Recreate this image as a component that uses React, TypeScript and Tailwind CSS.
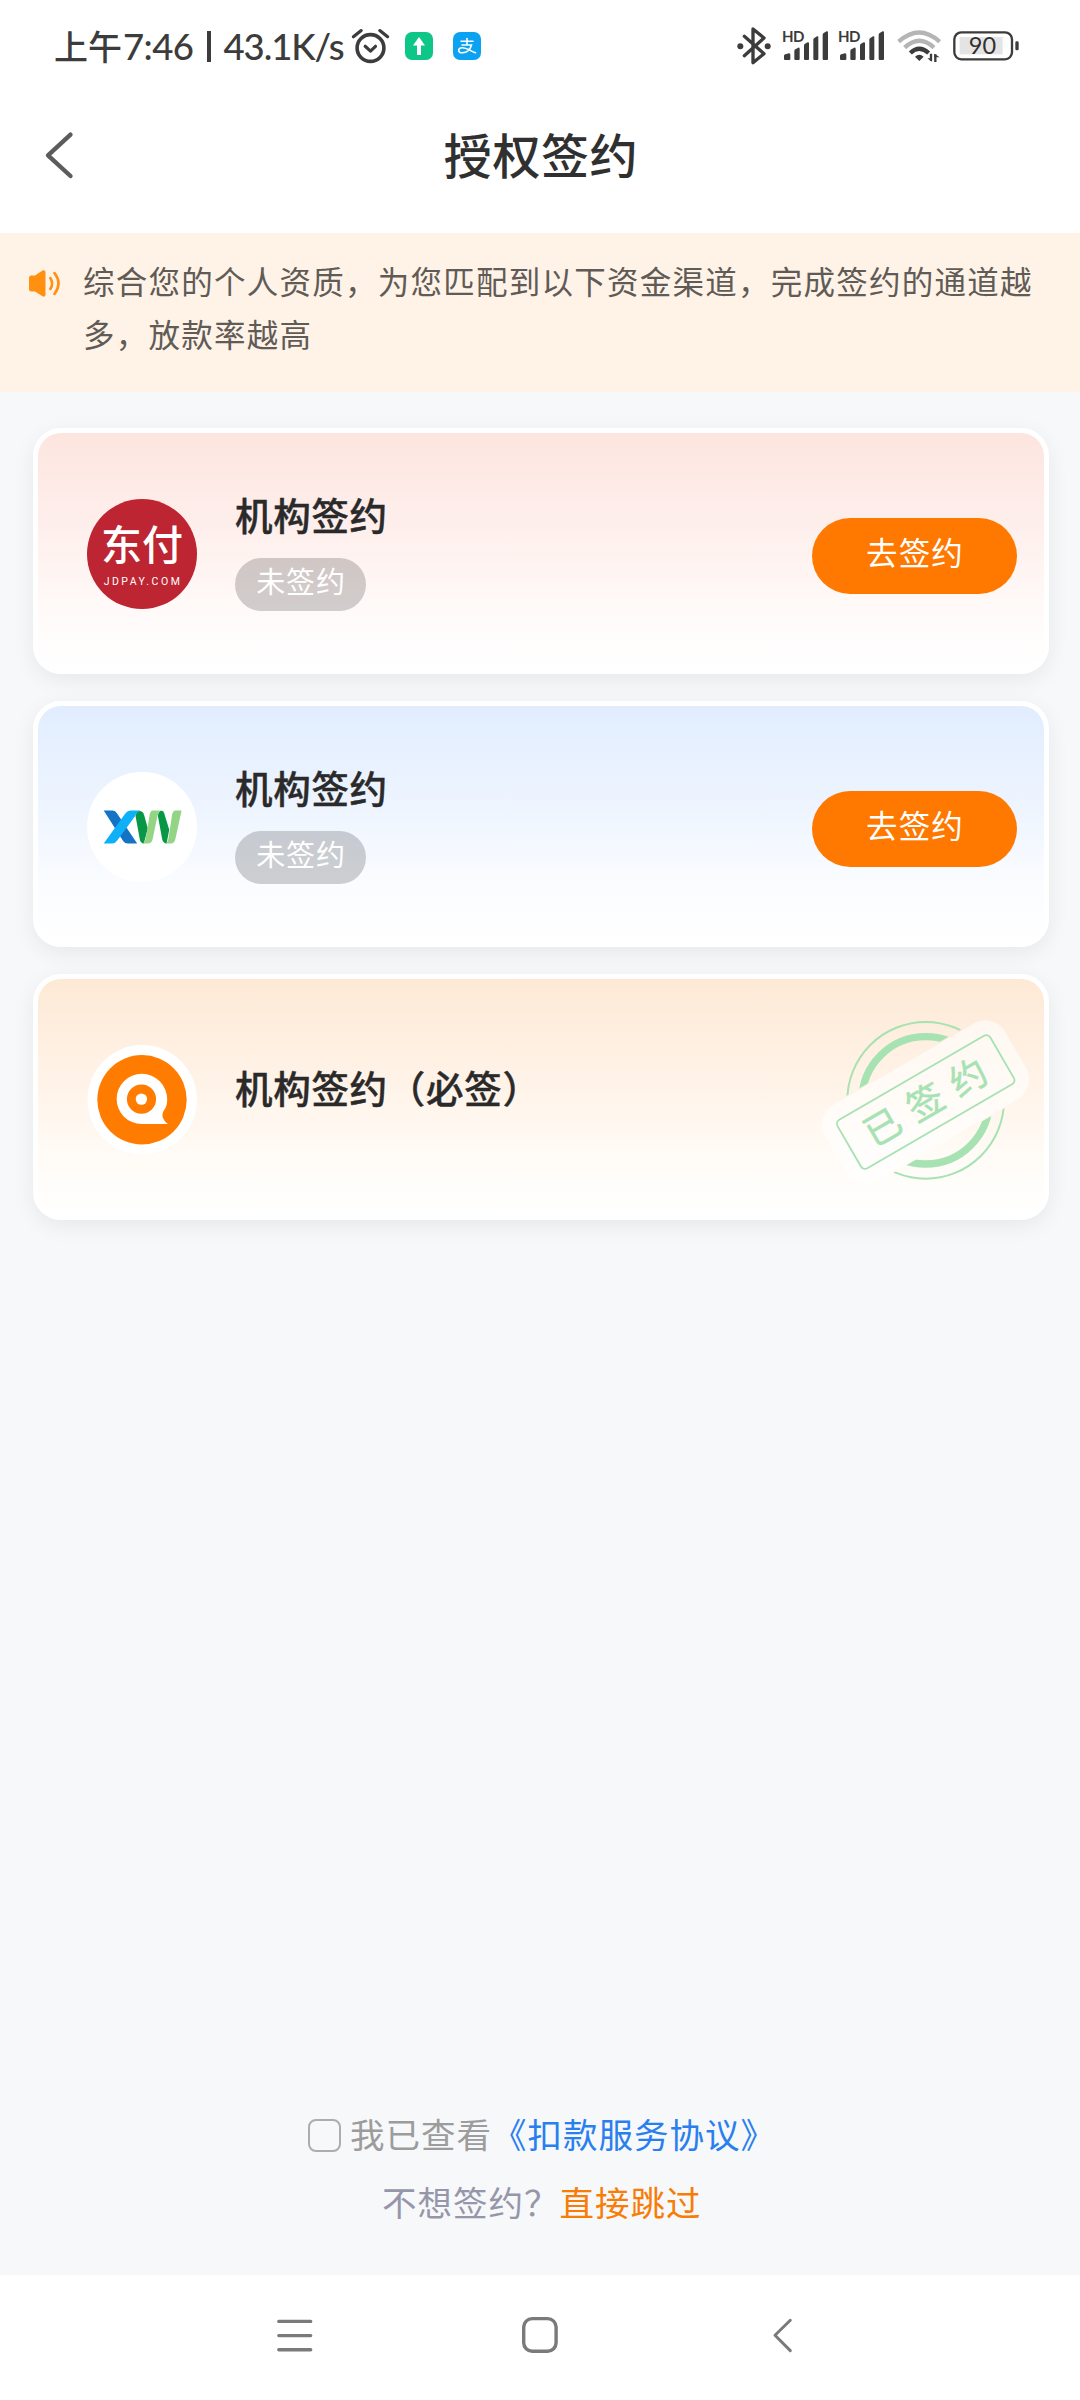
import React from "react";

const INK = "#3c3c3d";

function AlarmIcon() {
  return (
    <svg className="ml-[6px] h-[36px] w-[39px]" viewBox="0 0 39 36" fill="none" stroke={INK} strokeLinecap="round">
      <circle cx="19.5" cy="20" r="13.4" strokeWidth="3.6" />
      <path d="M14.2 18.3l5.3 4.8 5-4.8" strokeWidth="3.2" strokeLinejoin="round" />
      <path d="M2.4 8.8l7.8-6.2M36.6 8.8l-7.8-6.2" strokeWidth="3.2" />
    </svg>
  );
}

function BluetoothIcon() {
  return (
    <svg className="h-[38px] w-[34px]" viewBox="112 82 102 114" fill="none">
      <path d="M134 110L193 162L160 189V88L193 115L134 168" stroke={INK} strokeWidth="10" strokeLinejoin="round" strokeLinecap="round" />
      <circle cx="122" cy="140" r="9" fill={INK} />
      <circle cx="204" cy="140" r="9" fill={INK} />
    </svg>
  );
}

function HdSignal() {
  return (
    <div className="relative h-[32px] w-[47px]">
      <span className="absolute top-0 left-0 font-['Lato'] text-[15px] leading-[12px] font-bold tracking-[-0.5px] text-[#3c3c3d]">HD</span>
      <svg className="absolute top-0 left-0 h-[32px] w-[47px]" viewBox="246 94 141 96" fill={INK}>
        <path d="M252 171Q252 168 256 167L267 164Q271 164 271 168V181Q271 184 268 184H255Q252 184 252 181Z" />
        <path d="M283 157Q283 154 286 152L295 147Q299 146 299 150V181Q299 184 296 184H286Q283 184 283 181Z" />
        <path d="M312 140Q312 137 315 135L323 131Q327 130 327 134V181Q327 184 324 184H315Q312 184 312 181Z" />
        <path d="M340 123Q340 120 343 118L351 113Q355 112 355 116V181Q355 184 352 184H343Q340 184 340 181Z" />
        <path d="M368 108Q368 105 371 103L380 98Q384 97 384 101V181Q384 184 381 184H371Q368 184 368 181Z" />
      </svg>
    </div>
  );
}

function WifiIcon() {
  return (
    <svg className="ml-[12px] h-[34px] w-[44px]" viewBox="587 91 132 102" fill="none" strokeLinecap="butt">
      <path d="M592 129Q653 74 715 129" stroke="#b5b5b5" strokeWidth="13" />
      <path d="M610 147Q654 106 698 147" stroke="#b5b5b5" strokeWidth="13" />
      <path d="M627 163Q654 138 682 163" stroke={INK} strokeWidth="13" />
      <path d="M641 174Q654 162 667 174L654 187Z" fill={INK} />
      <path d="M689 165V186M702 190V167" stroke={INK} strokeWidth="7" />
      <path d="M678 179L692 189V179ZM699 165L715 176H699Z" fill={INK} />
    </svg>
  );
}

function Battery() {
  return (
    <div className="relative ml-[12px] h-[30px] w-[67px]">
      <svg className="absolute inset-0 h-[30px] w-[67px]" viewBox="760 95 201 90" fill="none">
        <rect x="780" y="113" width="129" height="52" fill="#e4e4e4" />
        <rect x="764" y="99" width="173" height="81" rx="21" stroke={INK} strokeWidth="7" />
        <rect x="947" y="126" width="10" height="27" rx="4" fill={INK} />
      </svg>
      <span className="absolute top-0 left-0 h-[30px] w-[59px] text-center font-['Lato'] text-[23.5px] leading-[28px] text-[#303030]">90</span>
    </div>
  );
}

function StatusBar() {
  return (
    <div className="flex h-[92px] items-center bg-white pr-[60px] pl-[54px] text-[#3c3c3d]">
      <div className="flex h-[40px] items-center whitespace-nowrap font-medium">
        <span className="w-[69px] text-[34px] leading-[40px]">上午</span>
        <span className="w-[84px] font-['Lato'] text-[36.5px] leading-[40px] tracking-[-0.6px]">7:46</span>
        <span className="h-[31px] w-[3.5px] bg-[#3c3c3d]" />
        <span className="ml-[13px] w-[121px] font-['Lato'] text-[36.5px] leading-[40px] tracking-[-1.1px]">43.1K/s</span>
      </div>
      <AlarmIcon />
      <svg className="ml-[15px] h-[28px] w-[28px]" viewBox="0 0 28 28">
        <rect width="28" height="28" rx="7" fill="#0ec688" />
        <path d="M14 5l6 8.500h-4v9.500h-4v-9.500h-4z" fill="#fff" />
      </svg>
      <svg className="ml-[20px] h-[28px] w-[28px]" viewBox="0 0 28 28" fill="none" stroke="#fff" strokeLinecap="round">
        <rect width="28" height="28" rx="7" fill="#0ca2f2" stroke="none" />
        <path d="M8 9.200H20M14 6.500V13M9 13H18.500C17.800 15.500 15.500 20.500 9.500 20.800C4.500 21 4.500 16 9 15.800C13.500 15.600 17 18.800 22.500 20.800" strokeWidth="1.600" />
      </svg>
      <div className="ml-auto flex items-center">
        <BluetoothIcon />
        <div className="ml-[11px] flex gap-[9px]">
          <HdSignal />
          <HdSignal />
        </div>
        <WifiIcon />
        <Battery />
      </div>
    </div>
  );
}

function TitleBar() {
  return (
    <header className="grid h-[141px] grid-cols-[1fr_auto_1fr] items-start bg-white">
      <svg className="mt-[38px] ml-[42px] h-[50px] w-[36px]" viewBox="42 130 36 50" fill="none" stroke="#5c5c5c" strokeWidth="4.400" strokeLinecap="round" strokeLinejoin="round">
        <path d="M70.500 134.700L48 155.300L70.500 176" />
      </svg>
      <h1 className="mt-[26px] pl-[2px] text-[48px] leading-[70px] font-medium tracking-[0.6px] text-[#303030]">授权签约</h1>
    </header>
  );
}

function Notice() {
  return (
    <div className="flex h-[159px] bg-[#fff2e7] pt-[21px] pl-[28px]">
      <svg className="mt-[15px] h-[29px] w-[33px] shrink-0" viewBox="0 0 33 29" fill="none" stroke="#ff9010" strokeLinecap="round">
        <path d="M3.500 6.500H7L14.500 1.500Q17.500 .5 17.500 3.500V25.500Q17.500 28.500 14.500 27.300L7 22.500H3.500Q1 22.500 1 20V9Q1 6.500 3.500 6.500Z" fill="#ff9010" stroke="none" />
        <path d="M22.300 9Q26 14.500 22.300 20" strokeWidth="2.600" />
        <path d="M26.500 4Q34.500 14.500 26.500 25" strokeWidth="2.600" />
      </svg>
      <p className="ml-[22px] w-[952px] text-[31.500px] leading-[53px] tracking-[1.250px] text-[#605b56]">
        综合您的个人资质，为您匹配到以下资金渠道，完成签约的通道越
        <br />
        多，放款率越高
      </p>
    </div>
  );
}

function DongfuLogo() {
  return (
    <div className="flex h-[110px] w-[110px] flex-col items-center rounded-full bg-[#bd2532] text-white">
      <div className="mt-[14px] flex h-[59px] text-[41px] leading-[59px] font-medium">东付</div>
      <div className="mt-[3px] pl-[2px] font-['Roboto'] text-[10.500px] leading-[14px] tracking-[2.500px]">JDPAY.COM</div>
    </div>
  );
}

function XwLogo() {
  return (
    <svg className="h-[110px] w-[110px]" viewBox="202 245 329 329">
      <circle cx="366.500" cy="409" r="164.500" fill="#fff" />
      <path d="M252 360H279Q287 361 291 368L352 459H324Q315 459 310 451Z" fill="#1473c4" />
      <path d="M347 376Q349 362 361 362Q370 363 373 374L384 414L372 459Q362 458 360 447Z" fill="#079747" />
      <path d="M414 376Q416 361 425 361Q432 362 434 372L448 418L440 459Q430 458 427 447Z" fill="#079747" />
      <path d="M362 360H334Q323 360 316 370L252 459H278Q287 458 293 449L345 378Q350 364 362 360Z" fill="#0eb0f7" />
      <path d="M396 360H424Q415 363 413 376L398 447Q395 459 384 459H368Q375 456 378 442L390 370Q392 362 396 360Z" fill="#93d584" />
      <path d="M464 360H485L466 447Q463 459 452 459H437Q444 456 446 442L457 370Q459 362 464 360Z" fill="#93d584" />
    </svg>
  );
}

function QLogo() {
  return (
    <svg className="h-[110px] w-[110px]" viewBox="87 1044.500 110 110">
      <circle cx="142.200" cy="1099.300" r="54.700" fill="#fff" />
      <circle cx="142" cy="1099.300" r="44.700" fill="#ff7c00" />
      <path d="M141.700 1073.300A25.600 25.600 0 0 1 167.200 1098.900C167.200 1104 166 1107 163.600 1110.500C161.500 1114 162 1119 167.800 1123.500H141.700A25.100 25.100 0 0 1 141.700 1073.300Z" fill="#fff" />
      <circle cx="141.500" cy="1098.600" r="14.600" fill="#ff7c00" />
      <circle cx="141.400" cy="1098.600" r="5.700" fill="#fff" />
    </svg>
  );
}

function SignedStamp() {
  return (
    <svg className="absolute top-[33px] right-[7px] h-[178px] w-[220px]" viewBox="115 155 660 534" fill="none">
      <defs>
        <mask id="stamp-gap" maskUnits="userSpaceOnUse" x="115" y="155" width="660" height="534">
          <rect x="115" y="155" width="660" height="534" fill="#fff" />
          <rect x="41" y="290" width="800" height="270" transform="rotate(-30.100 441 425)" fill="#000" />
        </mask>
      </defs>
      <g mask="url(#stamp-gap)" stroke="#a6e2b2">
        <circle cx="441" cy="420" r="235" strokeWidth="6" />
        <circle cx="441" cy="420" r="191" strokeWidth="22" />
      </g>
      <g transform="rotate(-30.100 441 425)">
        <rect x="129" y="294" width="624" height="262" rx="68" fill="#fff" fillOpacity="0.6" />
        <rect x="176" y="341" width="530" height="168" rx="14" stroke="#a6e2b2" strokeWidth="5.500" />
        <text x="441" y="465" textAnchor="middle" dx="18" fontSize="110" letterSpacing="38" fill="#a6e2b2" stroke="#a6e2b2" strokeWidth="1.500">
          已签约
        </text>
      </g>
    </svg>
  );
}

function Card({ tint, logo, children }: { tint: string; logo: React.ReactNode; children: React.ReactNode }) {
  return (
    <section className={`relative flex h-[246px] w-[1016px] rounded-[28px] border-[5px] border-white pl-[49px] shadow-[0_6px_22px_rgba(0,0,0,0.065)] ${tint}`}>
      <div className="mt-[66px] h-[110px] w-[110px] shrink-0">{logo}</div>
      {children}
    </section>
  );
}

function PendingContent() {
  return (
    <>
      <div className="ml-[38px] flex flex-col items-start">
        <h2 className="mt-[53px] text-[37.500px] leading-[56px] font-medium tracking-[0.700px] text-[#2a2a2a] [-webkit-text-stroke:0.4px_#2a2a2a]">机构签约</h2>
        <span className="mt-[16px] flex h-[53px] w-[131px] justify-center rounded-full bg-black/18 pl-[1px] text-[29px] leading-[45px] tracking-[0.800px] text-white">未签约</span>
      </div>
      <button className="mt-[85px] mr-[27px] ml-auto h-[76px] w-[205px] rounded-full bg-[#ff7800] pb-[9px] pl-[1px] text-[31.500px] leading-[67px] tracking-[1.200px] text-white">
        去签约
      </button>
    </>
  );
}

function NavBar() {
  return (
    <nav className="flex h-[125px] items-start bg-white pt-[39px] pl-[275px]">
      <svg className="h-[44px] w-[40px]" viewBox="275 2314 40 44" stroke="#7a7a7a" strokeWidth="3.400" strokeLinecap="round">
        <path d="M278.800 2321.400H310.700M278.800 2335.600H310.700M278.800 2349.800H310.700" />
      </svg>
      <svg className="ml-[205px] h-[44px] w-[40px]" viewBox="520 2314 40 44" fill="none" stroke="#7a7a7a" strokeWidth="3.400">
        <rect x="523.700" y="2318.600" width="32.400" height="32.600" rx="8.500" />
      </svg>
      <svg className="ml-[210px] h-[44px] w-[26px]" viewBox="770 2314 26 44" fill="none" stroke="#7a7a7a" strokeWidth="3" strokeLinecap="round" strokeLinejoin="round">
        <path d="M790.300 2320.300L775 2335.300L790.300 2350.600" />
      </svg>
    </nav>
  );
}

export default function App() {
  return (
    <div className="flex h-[2400px] w-[1080px] flex-col overflow-hidden bg-[#f6f8fa] font-['Noto_Sans_CJK_SC',sans-serif]">
      <StatusBar />
      <TitleBar />
      <Notice />
      <main className="flex flex-1 flex-col gap-[27px] pt-[36px] pl-[33px]">
        <Card tint="bg-[linear-gradient(180deg,#fde5df,#feefec_40%,#fffaf9_75%,#fff)]" logo={<DongfuLogo />}>
          <PendingContent />
        </Card>
        <Card tint="bg-[linear-gradient(180deg,#e1edff,#edf4ff_40%,#fafcff_75%,#fff)]" logo={<XwLogo />}>
          <PendingContent />
        </Card>
        <Card tint="bg-[linear-gradient(180deg,#fde9d5,#fff2e6_40%,#fffbf6_75%,#fff)]" logo={<QLogo />}>
          <h2 className="mt-[80px] ml-[38px] text-[37.500px] leading-[56px] font-medium tracking-[0.700px] text-[#2a2a2a] [-webkit-text-stroke:0.4px_#2a2a2a]">机构签约（必签）</h2>
          <SignedStamp />
        </Card>
      </main>
      <footer className="flex h-[176px] flex-col text-[34.500px] leading-[68px] tracking-[1px]">
        <div className="flex items-center pl-[308px]">
          <span className="mt-[4px] mr-[9px] h-[33px] w-[33px] rounded-[8px] border-[2.500px] border-[#adadad]" />
          <span className="text-[#9c9c9c]">我已查看</span>
          <a className="text-[#2a7fee]">《扣款服务协议》</a>
        </div>
        <div className="flex pl-[382px]">
          <span className="text-[#9696aa]">不想签约？</span>
          <a className="text-[#f87c06]">直接跳过</a>
        </div>
      </footer>
      <NavBar />
    </div>
  );
}
